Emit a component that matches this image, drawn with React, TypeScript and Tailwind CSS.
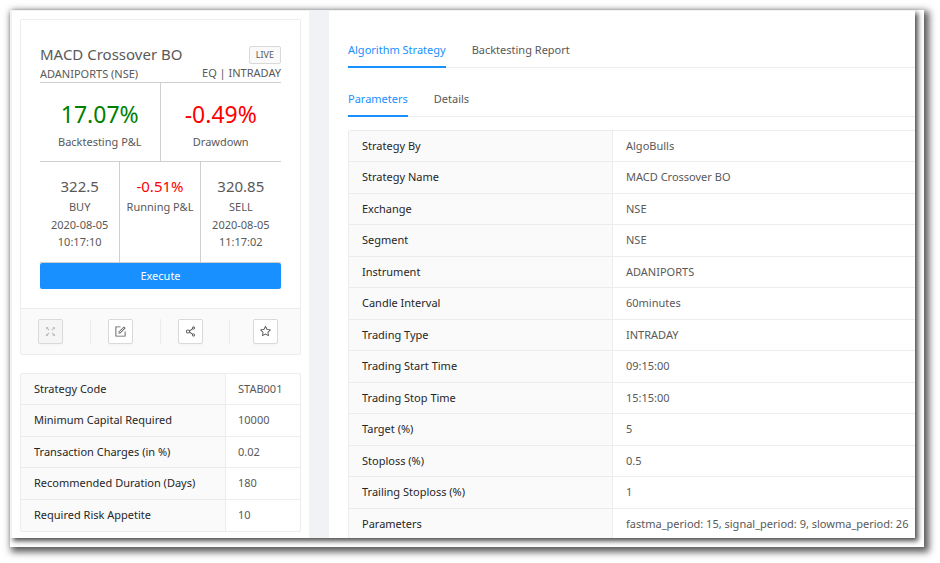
import type { ReactNode } from "react";
import {
  AiOutlineForm,
  AiOutlineFullscreen,
  AiOutlineShareAlt,
  AiOutlineStar,
} from "react-icons/ai";

type Row = [label: string, value: string];

const summary: Row[] = [
  ["Strategy Code", "STAB001"],
  ["Minimum Capital Required", "10000"],
  ["Transaction Charges (in %)", "0.02"],
  ["Recommended Duration (Days)", "180"],
  ["Required Risk Appetite", "10"],
];

const parameters: Row[] = [
  ["Strategy By", "AlgoBulls"],
  ["Strategy Name", "MACD Crossover BO"],
  ["Exchange", "NSE"],
  ["Segment", "NSE"],
  ["Instrument", "ADANIPORTS"],
  ["Candle Interval", "60minutes"],
  ["Trading Type", "INTRADAY"],
  ["Trading Start Time", "09:15:00"],
  ["Trading Stop Time", "15:15:00"],
  ["Target (%)", "5"],
  ["Stoploss (%)", "0.5"],
  ["Trailing Stoploss (%)", "1"],
  ["Parameters", "fastma_period: 15, signal_period: 9, slowma_period: 26"],
];

function DataTable({ rows, labelWidth, valuePad }: { rows: Row[]; labelWidth: string; valuePad: string }) {
  return (
    <table className="w-full table-fixed border-separate border-spacing-0 rounded-xs border border-[#ececec]">
      <tbody>
        {rows.map(([label, value]) => (
          <tr key={label} className="group h-[31px] even:h-8">
            <th
              scope="row"
              className={`${labelWidth} border-r border-b border-[#ececec] bg-[#fafafa] px-[13px] text-left font-normal whitespace-nowrap text-[#262626] group-last:border-b-0`}
            >
              {label}
            </th>
            <td className={`${valuePad} border-b border-[#ececec] whitespace-nowrap group-last:border-b-0`}>
              {value}
            </td>
          </tr>
        ))}
      </tbody>
    </table>
  );
}

function Tabs({ names, pad }: { names: string[]; pad: string }) {
  return (
    <div role="tablist" className="flex gap-[26px] border-b border-[#ececec]">
      {names.map((name, i) => (
        <button
          key={name}
          type="button"
          role="tab"
          aria-selected={i === 0}
          className={`${pad} -mb-px border-b-2 leading-4 ${
            i === 0 ? "border-[#1890ff] text-[#1890ff]" : "border-transparent"
          }`}
        >
          {name}
        </button>
      ))}
    </div>
  );
}

function IconButton({ label, disabled, children }: { label: string; disabled?: boolean; children: ReactNode }) {
  return (
    <button
      type="button"
      aria-label={label}
      disabled={disabled}
      className="flex size-[25px] items-center justify-center rounded-xs border border-[#d9d9d9] bg-white text-[13px] text-[#595959] shadow-[0_2px_0_rgba(0,0,0,0.015)] disabled:bg-[#f5f5f5] disabled:text-[#b8b8b8]"
    >
      {children}
    </button>
  );
}

function Trade({ price, side, date, time }: { price: string; side: string; date: string; time: string }) {
  return (
    <div>
      <div className="text-[15px] leading-6">{price}</div>
      <div className="leading-[18px]">{side}</div>
      <div className="leading-[17px]">{date}</div>
      <div className="leading-[18px]">{time}</div>
    </div>
  );
}

function StrategyCard() {
  return (
    <section className="rounded-xs border border-[#ececec]">
      <div className="px-[19px] pt-[23px] pb-[19px]">
        <header className="flex items-end justify-between">
          <div>
            <h1 className="text-[15px] leading-[22px]">MACD Crossover BO</h1>
            <div className="leading-[17px]">ADANIPORTS (NSE)</div>
          </div>
          <div className="flex flex-col items-end gap-px">
            <span className="rounded-xs border border-[#d9d9d9] bg-[#fafafa] px-[6px] text-[9px] leading-4">
              LIVE
            </span>
            <div className="pb-px leading-4">EQ | INTRADAY</div>
          </div>
        </header>
        <div className="grid grid-cols-2 divide-x divide-[#cfcfcf] border-t border-[#cfcfcf] text-center">
          <div className="pt-[15px] pb-[11px]">
            <div className="text-[23px] leading-8 text-[#008000]">17.07%</div>
            <div className="pt-[3px] leading-[17px]">Backtesting P&amp;L</div>
          </div>
          <div className="pt-[15px] pb-[11px]">
            <div className="text-[23px] leading-8 text-[#ff0000]">-0.49%</div>
            <div className="pt-[3px] leading-[17px]">Drawdown</div>
          </div>
        </div>
        <div className="grid grid-cols-3 divide-x divide-[#cfcfcf] border-y border-[#cfcfcf] text-center *:pt-3 *:pb-[11px]">
          <Trade price="322.5" side="BUY" date="2020-08-05" time="10:17:10" />
          <div>
            <div className="text-[15px] leading-6 text-[#ff0000]">-0.51%</div>
            <div className="leading-[18px] whitespace-nowrap">Running P&amp;L</div>
          </div>
          <Trade price="320.85" side="SELL" date="2020-08-05" time="11:17:02" />
        </div>
        <button type="button" className="block h-[26px] w-full rounded-xs bg-[#1890ff] pt-px text-white">
          Execute
        </button>
      </div>
      <footer className="grid grid-cols-4 divide-x divide-[#ececec] border-t border-[#ececec] bg-[#fafafa] py-[10px] *:flex *:justify-center">
        <div className="pr-[10px]">
          <IconButton label="Expand" disabled>
            <AiOutlineFullscreen />
          </IconButton>
        </div>
        <div className="pr-[10px]">
          <IconButton label="Edit">
            <AiOutlineForm />
          </IconButton>
        </div>
        <div className="pr-2">
          <IconButton label="Share">
            <AiOutlineShareAlt />
          </IconButton>
        </div>
        <div>
          <IconButton label="Favourite">
            <AiOutlineStar />
          </IconButton>
        </div>
      </footer>
    </section>
  );
}

export default function App() {
  return (
    <div className="flex h-screen bg-white pt-[10px] pr-4 pb-4 pl-[10px] font-['Noto_Sans',sans-serif] text-[11px] text-[#595959]">
      <div className="flex min-w-0 flex-1 bg-white pr-[9px] pb-[9px] shadow-[3px_3px_7px_2px_rgba(0,0,0,0.65)]">
        <div className="flex min-w-0 flex-1 gap-5 overflow-hidden bg-[#f0f2f5] pt-px pl-[2px] shadow-[3px_3px_5px_rgba(0,0,0,0.7)]">
          <aside className="flex w-[297px] shrink-0 flex-col gap-[18px] bg-white px-2 pt-2">
            <StrategyCard />
            <DataTable rows={summary} labelWidth="w-[205px]" valuePad="px-3" />
          </aside>
          <main className="min-w-0 flex-1 bg-white pl-[19px]">
            <Tabs names={["Algorithm Strategy", "Backtesting Report"]} pad="pt-[31px] pb-2" />
            <Tabs names={["Parameters", "Details"]} pad="pt-[23px] pb-2" />
            <div className="-mr-5 pt-[13px]">
              <DataTable rows={parameters} labelWidth="w-[264px]" valuePad="px-[13px]" />
            </div>
          </main>
        </div>
      </div>
    </div>
  );
}
